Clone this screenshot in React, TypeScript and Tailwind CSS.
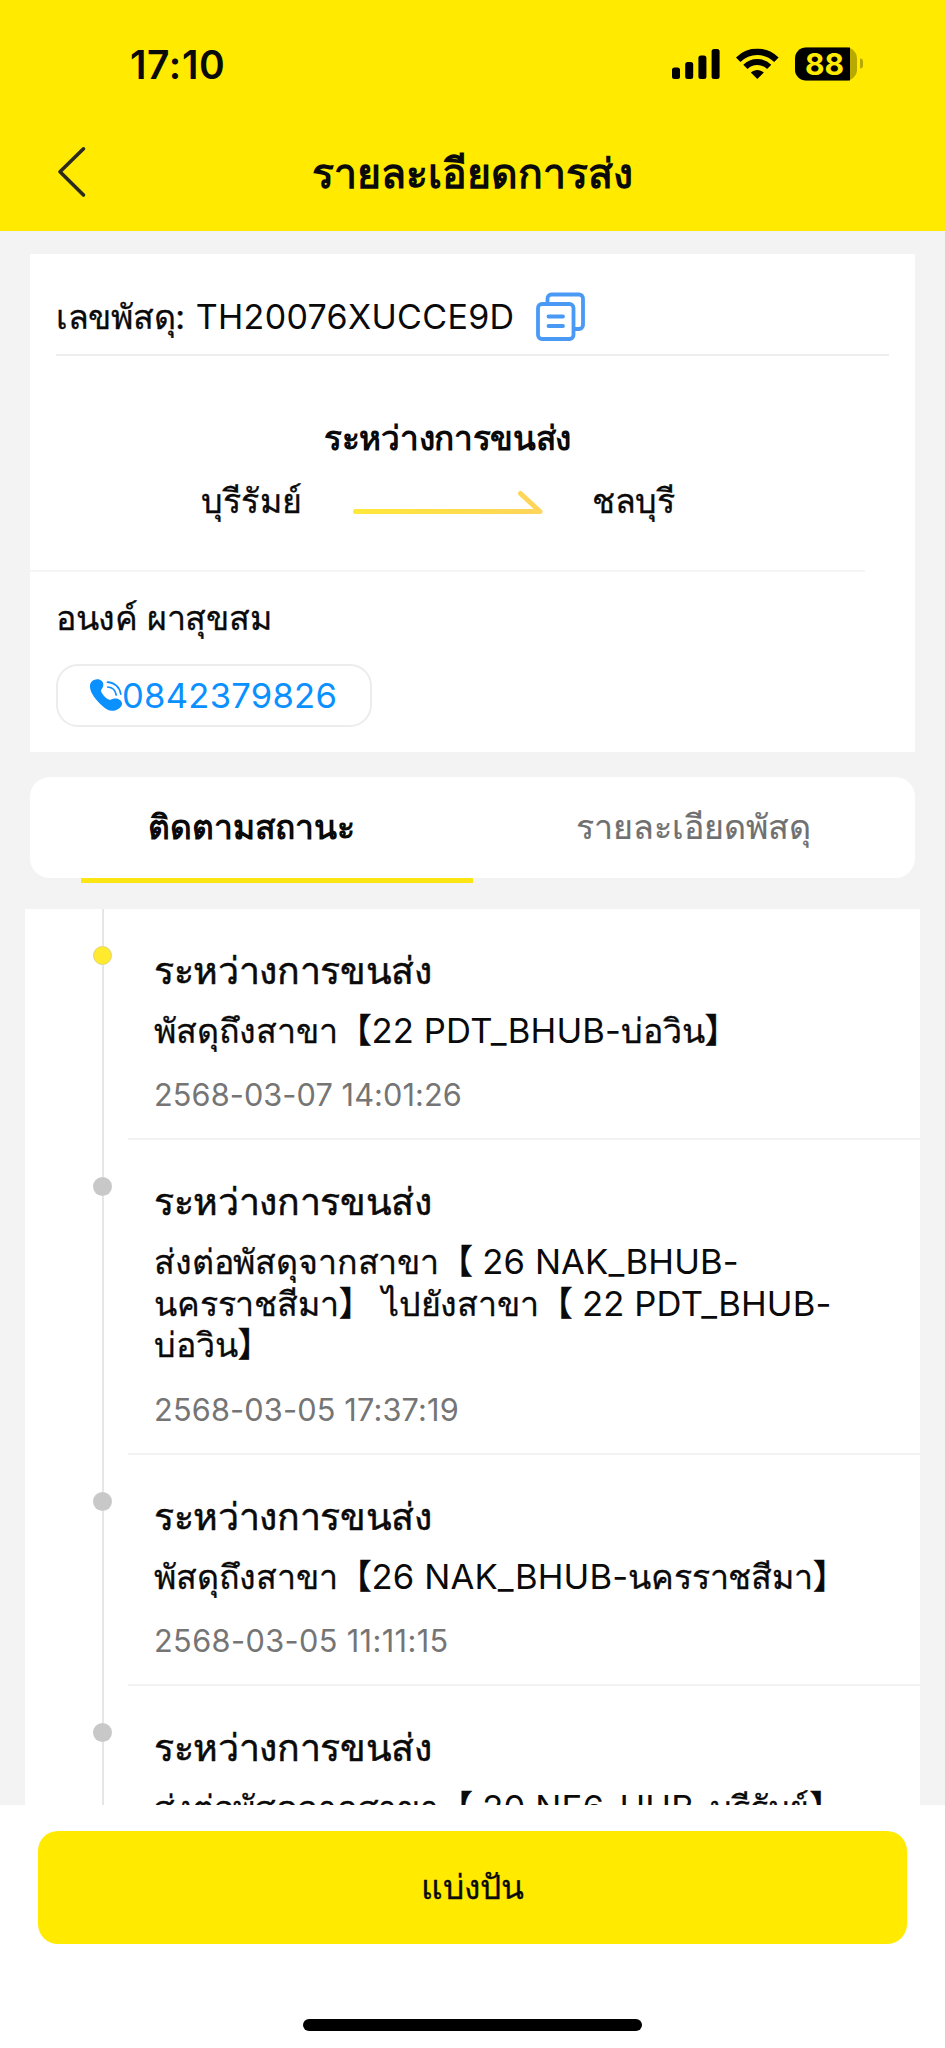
type Entry = { title: string; lines: string[]; time?: string; timeTracking?: string; active?: boolean };

const entries: Entry[] = [
  {
    title: "ระหว่างการขนส่ง",
    lines: ["พัสดุถึงสาขา【22 PDT_BHUB-บ่อวิน】"],
    time: "2568-03-07 14:01:26",
    timeTracking: "tracking-[0.08px]",
    active: true,
  },
  {
    title: "ระหว่างการขนส่ง",
    lines: [
      "ส่งต่อพัสดุจากสาขา【 26 NAK_BHUB-",
      "นครราชสีมา】 ไปยังสาขา【 22 PDT_BHUB-",
      "บ่อวิน】",
    ],
    time: "2568-03-05 17:37:19",
    timeTracking: "tracking-[0.16px]",
  },
  {
    title: "ระหว่างการขนส่ง",
    lines: ["พัสดุถึงสาขา【26 NAK_BHUB-นครราชสีมา】"],
    time: "2568-03-05 11:11:15",
    timeTracking: "tracking-[0.38px]",
  },
  {
    title: "ระหว่างการขนส่ง",
    lines: ["ส่งต่อพัสดุจากสาขา【 20 NE6_HUB-บุรีรัมย์】"],
  },
];

function StatusBar() {
  return (
    <div className="flex h-[48px] items-center justify-between pr-[82px] pl-[130px]">
      <span className="text-[39px] leading-[48px] font-semibold tracking-[0.6px]">17:10</span>
      <div className="flex -translate-y-[1.5px] items-center">
        <svg className="h-[31px] w-[48px]" viewBox="0 0 48 31" fill="#000">
          <rect x="0" y="19" width="8" height="11.5" rx="2.5" />
          <rect x="13.2" y="13.5" width="8" height="17" rx="2.5" />
          <rect x="26.4" y="7" width="8" height="23.5" rx="2.5" />
          <rect x="39.6" y="0.5" width="8" height="30" rx="2.5" />
        </svg>
        <svg className="ml-[16px] h-[31px] w-[43px]" viewBox="0 0 43 31" fill="none" stroke="#000">
          <path d="M2.2 11.2C13 .6 29.600 .6 40.400 11.2" strokeWidth="6.400" />
          <path d="M9.400 18.400C16 11.900 26.600 11.900 33.200 18.400" strokeWidth="6" />
          <path d="M14.800 24C18.600 20.500 24 20.500 27.800 24L21.300 30.600Z" fill="#000" stroke="none" />
        </svg>
        <div className="ml-[16px] flex h-[33px] w-[62px] items-center rounded-[11px] bg-[#b8a900]">
          <div className="flex h-full w-[55px] items-center justify-center rounded-l-[11px] bg-black text-[30px] leading-[33px] font-bold text-[#ffea00]">
            <span className="translate-x-[2px]">88</span>
          </div>
        </div>
        <div className="ml-[2.5px] h-[10px] w-[3.500px] rounded-r-[3px] bg-[#b8a900]" />
      </div>
    </div>
  );
}

function Header() {
  return (
    <header className="h-[231px] bg-[#ffea00] pt-[41px]">
      <StatusBar />
      <div className="mt-[58px] grid h-[50px] grid-cols-[100px_1fr_100px] items-center">
        <svg className="ml-[56px] h-[52px] w-[31px] -translate-y-[1px]" viewBox="0 0 31 52" fill="none" stroke="#2b2a1c" strokeWidth="3.600" strokeLinecap="round" strokeLinejoin="round">
          <path d="M27.500 2.800L4 25.800L27.500 49" />
        </svg>
        <h1 className="text-center text-[41px] leading-[50px] font-bold whitespace-nowrap">รายละเอียดการส่ง</h1>
      </div>
    </header>
  );
}

function ParcelCard() {
  return (
    <section className="mx-[30px] mt-[23px] h-[498px] bg-white">
      <div className="mx-[26px] flex h-[102px] items-center border-b-2 border-[#eeeeee] pt-[25px]">
        <span className="text-[34px] leading-[42px] whitespace-nowrap">
          <span className="tracking-[-0.3px] [-webkit-text-stroke:0.3px]">เลขพัสดุ:</span>{" "}
          <span className="ml-[1.500px] tracking-[0.32px]">TH20076XUCCE9D</span>
        </span>
        <svg className="ml-[22px] h-[50px] w-[50px]" viewBox="0 0 50 50" fill="none" stroke="#4a9af5" strokeWidth="3.800" strokeLinecap="round" strokeLinejoin="round">
          <path d="M11.500 11V6.500a4 4 0 0 1 4-4H43a4 4 0 0 1 4 4V33a4 4 0 0 1-4 4H39" />
          <rect x="2" y="12" width="35.500" height="35" rx="4" />
          <path d="M12.500 24.500h14.500M12.500 34h14.500" />
        </svg>
      </div>
      <div className="mr-[50px] h-[216px] border-b-2 border-[#f5f5f5] pt-[59px]">
        <div className="pl-[294px] text-[33.3px] leading-[46px] font-bold tracking-[-0.3px]">ระหว่างการขนส่ง</div>
        <div className="mt-[19px] flex items-center text-[34px] leading-[42px] whitespace-nowrap">
          <span className="ml-[171px] w-[151px] tracking-[0.2px] [-webkit-text-stroke:0.3px]">บุรีรัมย์</span>
          <svg className="mt-[2px] h-[26px] w-[192px]" viewBox="0 0 192 26" fill="none" stroke="url(#route)" strokeWidth="5" strokeLinecap="round" strokeLinejoin="round">
            <defs>
              <linearGradient id="route" gradientUnits="userSpaceOnUse" x1="0" y1="0" x2="192" y2="0">
                <stop offset="0" stopColor="#ffe83a" />
                <stop offset="1" stopColor="#ffd45c" />
              </linearGradient>
            </defs>
            <path d="M3.500 22.500H188L168.500 4.500" />
          </svg>
          <span className="ml-[48px] tracking-[-0.4px] [-webkit-text-stroke:0.3px]">ชลบุรี</span>
        </div>
      </div>
      <div className="pt-[23px] pl-[26px]">
        <div className="text-[34px] leading-[46px] tracking-[-0.3px] [-webkit-text-stroke:0.3px]">อนงค์ ผาสุขสม</div>
        <div className="mt-[23px] flex h-[63px] w-[316px] items-center rounded-[22px] border-2 border-[#ececec] pb-[2px] pl-[31px] text-[#0a90ff]">
          <svg className="h-[34px] w-[34px] shrink-0" viewBox="0 0 34 34" fill="none">
            <path
              d="M1 7.500C1.200 3.500 5.500 .5 9.500 1.300C13.500 2.200 15.500 6 13.800 9.200C12.800 11 11.600 11.800 12.200 13.500C13.500 17 17 20.500 20.500 21.800C22 22.300 23 20.800 25.500 20.600C29.500 20.400 32.800 22.500 33 25.500C33.200 29.500 27.500 33 23 32.800C19.500 32.600 17 31 14 28.500C9.500 24.700 5.500 20 3 15.500C1.500 12.800 .9 10 1 7.500Z"
              fill="currentColor"
            />
            <path d="M18.500 4.200C25.500 4.500 30.800 9.300 31.800 16.200M18.800 9C23.200 9.400 26.500 12.400 27.200 17" stroke="currentColor" strokeWidth="1.700" strokeLinecap="round" />
          </svg>
          <span className="-ml-px text-[34.600px] leading-[42px] tracking-[0.25px]">0842379826</span>
        </div>
      </div>
    </section>
  );
}

function Tabs() {
  return (
    <nav className="mx-[30px] mt-[25px] grid h-[101px] grid-cols-2 rounded-[20px] bg-white text-[34px] leading-[42px]">
      <div className="flex h-[106px] flex-col items-center pl-[2px]">
        <span className="mt-[29px] -translate-x-[1px] text-[33.600px] font-bold">ติดตามสถานะ</span>
        <span className="mt-auto ml-[49px] h-[5px] w-[392px] self-start bg-[#fbe614]" />
      </div>
      <div className="flex flex-col items-center pt-[29px]">
        <span className="text-[#707070] [-webkit-text-stroke:0.2px]">รายละเอียดพัสดุ</span>
      </div>
    </nav>
  );
}

/** Sets Latin runs slightly larger than the Thai text around them. */
function MixedLine({ text }: { text: string }) {
  const runs = text.split(/([A-Z0-9_\-][A-Z0-9_\- ]*)/);
  return (
    <div className="flex h-[42px] items-baseline whitespace-pre">
      {runs.map((run, i) => (
        <span key={i} className={i % 2 ? "text-[34.600px] tracking-[0.15px]" : "tracking-[-0.15px] [-webkit-text-stroke:0.3px]"}>
          {run}
        </span>
      ))}
    </div>
  );
}

function TimelineItem({ title, lines, time, timeTracking, active }: Entry) {
  return (
    <li className="flex">
      <div className="flex w-[103px] shrink-0 justify-end pr-[16px]">
        <div className="flex w-[19px] flex-col items-center">
          <span className="h-[37px] w-[2px] bg-[#e6e6e6]" />
          <span className={active ? "size-[19px] rounded-full border border-[#e0d47a] bg-[#ffea2e]" : "size-[19px] rounded-full bg-[#c8c8c8]"} />
          <span className="w-[2px] grow bg-[#e6e6e6]" />
        </div>
      </div>
      <div className="grow border-b-2 border-[#f2f2f2] pt-[39px] pb-[24px] pl-[26px]">
        <div className="text-[37.500px] leading-[46px] tracking-[-0.35px] [-webkit-text-stroke:0.5px]">{title}</div>
        <div className="mt-[15px] text-[34px] leading-[42px]">
          {lines.map((line) => (
            <MixedLine key={line} text={line} />
          ))}
        </div>
        {time && <div className={`mt-[25px] text-[30.700px] leading-[38px] text-[#757575] ${timeTracking}`}>{time}</div>}
      </div>
    </li>
  );
}

export default function App() {
  return (
    <div className="flex h-[2048px] w-[945px] flex-col overflow-hidden bg-[#f3f3f3] font-['Inter','Noto_Sans_CJK_SC',sans-serif] text-[#0a0a0a]">
      <Header />
      <ParcelCard />
      <Tabs />
      <ul className="mx-[25px] mt-[31px] h-[896px] overflow-hidden bg-white">
        {entries.map((entry, i) => (
          <TimelineItem key={i} {...entry} />
        ))}
      </ul>
      <footer className="flex grow flex-col items-center bg-white pt-[26px]">
        <button className="h-[113px] w-[869px] rounded-[20px] bg-[#ffea00] pb-[2px] text-[33.500px] leading-[42px] [-webkit-text-stroke:0.3px]">แบ่งปัน</button>
        <div className="mt-[75px] h-[12px] w-[339px] rounded-full bg-black" />
      </footer>
    </div>
  );
}
